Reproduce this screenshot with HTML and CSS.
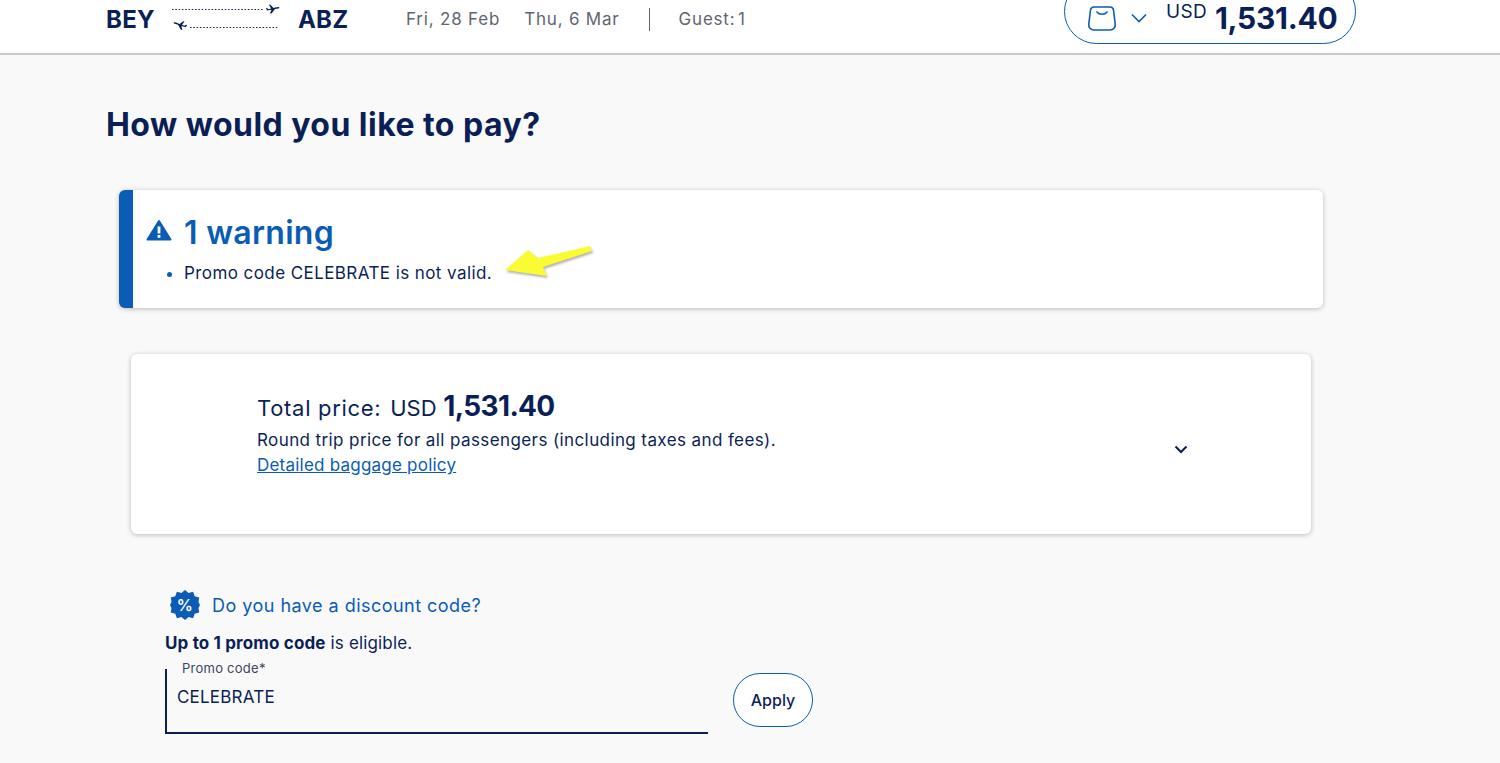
FILE: index.html
```html
<!DOCTYPE html>
<html>
<head>
  <title>Payment</title>
  <link rel="stylesheet" href="styles.css">
</head>
<body>
  <header class="top-bar">
    <div class="route">
      <span class="airport">BEY</span>
      <svg class="route-icon" width="110" height="32" viewBox="0 0 110 32">
        <line x1="1" y1="6.500" x2="92" y2="6.500" stroke="#0b1f57" stroke-width="1" stroke-dasharray="1.500 1.800"/>
        <line x1="19" y1="24.500" x2="108" y2="24.500" stroke="#0b1f57" stroke-width="1" stroke-dasharray="1.500 1.800"/>
        <g fill="#0b1f57">
          <path transform="translate(102 6)" d="M6.500-1.500C6-2.500 4-2 3-1.700L.5-1-2.500-4.200H-4L-2-.5-4.500.2-6-1H-7L-6 1.500-1.500.7-3 4.500H-1.500L2 0 5.500-.5C6.200-.7 6.700-1 6.500-1.500Z"/>
          <path transform="translate(9 22) scale(-1 1) rotate(-8)" d="M6.500-1.500C6-2.500 4-2 3-1.700L.5-1-2.500-4.200H-4L-2-.5-4.500.2-6-1H-7L-6 1.500-1.500.7-3 4.500H-1.500L2 0 5.500-.5C6.200-.7 6.700-1 6.500-1.500Z"/>
        </g>
      </svg>
      <span class="airport">ABZ</span>
    </div>
    <div class="trip-info">
      <span>Fri, 28 Feb</span>
      <span>Thu, 6 Mar</span>
      <span class="divider"></span>
      <span class="guests">Guest: 1</span>
    </div>
    <div class="basket">
      <svg width="32" height="30" viewBox="0 0 32 30" fill="none" stroke="#0a5cb4" stroke-width="1.600">
        <path d="M8 4h16c2 0 3.200 1 3.500 3l1.700 14c.4 3.500-1.700 6-5.200 6H8c-3.500 0-5.600-2.500-5.200-6L4.500 7C4.800 5 6 4 8 4z"/>
        <path d="M11 9c2 3 8 3 10 0" stroke-linecap="round"/>
      </svg>
      <svg class="basket-chevron" width="18" height="10" viewBox="0 0 18 10" fill="none" stroke="#0a5cb4" stroke-width="1.600">
        <path d="M2 1.500l7 7 7-7"/>
      </svg>
      <span class="basket-currency">USD</span>
      <span class="basket-amount">1,531.40</span>
    </div>
  </header>

  <main class="content">
    <h1>How would you like to pay?</h1>

    <section class="warning-card">
      <h2>
        <svg class="warning-icon" width="26" height="22" viewBox="0 0 26 22">
          <path d="M13 2L24.500 20.500H1.500z" fill="#0a5cb4" stroke="#0a5cb4" stroke-width="2" stroke-linejoin="round"/>
          <rect x="11.600" y="7.500" width="2.800" height="7" fill="#fff"/>
          <rect x="11.600" y="16" width="2.800" height="2.800" fill="#fff"/>
        </svg>
        1 warning
      </h2>
      <ul>
        <li><span>Promo code CELEBRATE is not valid.</span></li>
      </ul>
      <svg class="arrow" width="92" height="40" viewBox="0 0 92 40">
        <path d="M0 25L23 5l10 8L85 1l2 5L38 22l4 9z" fill="#fbfb33"/>
      </svg>
    </section>

    <section class="price-card">
      <div class="price-text">
        <p class="total"><span class="total-label">Total price:</span> <span class="total-currency">USD</span> <strong>1,531.40</strong></p>
        <p>Round trip price for all passengers (including taxes and fees).</p>
        <a href="#">Detailed baggage policy</a>
      </div>
      <svg class="price-chevron" width="14" height="9" viewBox="0 0 14 9" fill="none" stroke="#0b1f57" stroke-width="2">
        <path d="M1.500 1.500L7 7l5.500-5.500"/>
      </svg>
    </section>

    <section class="discount">
      <div class="discount-title">
        <svg width="30" height="30" viewBox="0 0 30 30">
          <path d="M15 0l3.600 3.100 4.500-1.300 1.600 4.400 4.500 1.300-.7 4.600L30 15l-1.500 2.900.7 4.600-4.500 1.300-1.600 4.400-4.500-1.300L15 30l-3.600-3.100-4.500 1.300-1.600-4.400-4.500-1.300.7-4.600L0 15l1.500-2.900-.7-4.600 4.500-1.300 1.600-4.400 4.500 1.300z" fill="#0a5cb4"/>
          <text x="15" y="21" text-anchor="middle" class="percent">%</text>
        </svg>
        <span>Do you have a discount code?</span>
      </div>
      <p class="eligible"><strong>Up to 1 promo code</strong> is eligible.</p>
      <div class="promo-row">
        <div class="promo-field">
          <label>Promo code*</label>
          <div class="promo-value">CELEBRATE</div>
        </div>
        <button class="apply-btn">Apply</button>
      </div>
    </section>
  </main>
</body>
</html>
```

FILE: styles.css
```css
html,
body {
  height: 100%;
}

body {
  margin: 0;
  background-color: #f9f9fa;
  color: #0b1f57;
  font-family: Inter, "Open Sans", sans-serif;
  overflow: hidden;
}

.top-bar {
  display: flex;
  align-items: center;
  height: 53px;
  padding: 0 144px 0 106px;
  background-color: #ffffff;
  border-bottom: 2px solid #c9c9c9;
  box-sizing: content-box;
  overflow: hidden;
}

.route {
  display: flex;
  align-items: center;
  width: 300px;
  margin-top: -15px;
}

.airport {
  font-size: 24px;
  font-weight: 700;
  letter-spacing: 0.3px;
}

.route-icon {
  margin: 0 17px 0 16px;
}

.trip-info {
  display: flex;
  align-items: center;
  gap: 24px;
  margin-top: -15px;
  color: #5f6670;
  font-size: 17px;
  letter-spacing: 0.8px;
}

.divider {
  width: 1px;
  height: 23px;
  background-color: #5f6670;
  margin: 0 5px;
}

.guests {
  word-spacing: -3px;
}

.basket {
  display: flex;
  align-items: center;
  align-self: flex-start;
  box-sizing: border-box;
  width: 292px;
  height: 65px;
  margin: -21px 0 0 auto;
  padding: 13px 0 0 21px;
  background-color: #ffffff;
  border: 1px solid #0a5cb4;
  border-radius: 33px;
}

.basket-chevron {
  margin: 0 18px 0 12px;
}

.basket-currency {
  margin: -14px 8px 0 0;
  font-size: 19px;
  letter-spacing: 0.3px;
}

.basket-amount {
  font-size: 30px;
  font-weight: 700;
  letter-spacing: -0.3px;
}

.content {
  padding: 0 0 0 106px;
}

h1 {
  margin: 50px 0 45px;
  font-size: 32px;
  line-height: 40px;
  font-weight: 700;
  letter-spacing: 0.46px;
}

.warning-card {
  position: relative;
  box-sizing: border-box;
  width: 1204px;
  height: 118px;
  margin: 0 0 46px 13px;
  padding: 25px 0 0 26px;
  background-color: #ffffff;
  border-left: 14px solid #0a5cb4;
  border-radius: 6px;
  box-shadow: 0 1px 5px rgba(0, 0, 0, 0.25);
}

.warning-card h2 {
  display: flex;
  align-items: center;
  gap: 12px;
  margin: 0 0 10px -13px;
  color: #0a5cb4;
  font-size: 32px;
  line-height: 36px;
  font-weight: 600;
  letter-spacing: 0.3px;
}

.warning-icon {
  margin-top: -6px;
}

.warning-card ul {
  margin: 0;
  padding: 0 0 0 25px;
  color: #0a5cb4;
  font-size: 17px;
  line-height: 24px;
}

.warning-card li span {
  color: #0b1f57;
  letter-spacing: 0.42px;
}

.arrow {
  position: absolute;
  left: 372px;
  top: 55px;
  filter: drop-shadow(1px 2px 1px rgba(0, 0, 0, 0.3));
}

.price-card {
  display: flex;
  align-items: flex-start;
  justify-content: space-between;
  box-sizing: border-box;
  width: 1180px;
  height: 180px;
  margin: 0 0 56px 25px;
  padding: 35px 123px 0 126px;
  background-color: #ffffff;
  border-radius: 6px;
  box-shadow: 0 1px 5px rgba(0, 0, 0, 0.25);
}

.price-text p {
  margin: 0;
  font-size: 17px;
  line-height: 24px;
  letter-spacing: 0.4px;
}

.price-text .total {
  line-height: 35px;
  letter-spacing: 0;
}

.total-label {
  font-size: 22px;
  letter-spacing: 0.7px;
}

.total-currency {
  margin-left: 4px;
  font-size: 22px;
}

.total strong {
  margin-left: 2px;
  font-size: 28px;
  letter-spacing: -0.65px;
}

.price-text a {
  display: block;
  color: #0a5cb4;
  font-size: 17px;
  line-height: 27px;
  letter-spacing: 0.22px;
}

.price-chevron {
  align-self: center;
  margin-top: -24px;
}

.discount {
  margin-left: 59px;
}

.discount-title {
  display: flex;
  align-items: center;
  gap: 12px;
  margin-left: 5px;
  color: #0a5cb4;
  font-size: 18px;
  letter-spacing: 0.47px;
}

.percent {
  fill: #ffffff;
  font-size: 16px;
  font-weight: 600;
}

.eligible {
  margin: 12px 0 15px;
  font-size: 17px;
  line-height: 22px;
  letter-spacing: 0.15px;
}

.promo-row {
  display: flex;
  align-items: flex-start;
  gap: 25px;
}

.promo-field {
  box-sizing: border-box;
  width: 543px;
  height: 65px;
  padding: 0 0 0 10px;
  border-left: 2px solid #0b1f57;
  border-bottom: 2px solid #0b1f57;
}

.promo-field label {
  display: block;
  margin: -9px 0 0 5px;
  font-size: 13px;
  line-height: 16px;
  letter-spacing: 0.25px;
  color: #3b4760;
}

.promo-value {
  margin-top: 11px;
  font-size: 17px;
  letter-spacing: 0.2px;
}

.apply-btn {
  width: 80px;
  height: 54px;
  margin-top: 4px;
  background-color: #ffffff;
  color: #0b1f57;
  border: 1px solid #0a5cb4;
  border-radius: 27px;
  font-family: inherit;
  font-size: 16px;
  font-weight: 500;
}
```
